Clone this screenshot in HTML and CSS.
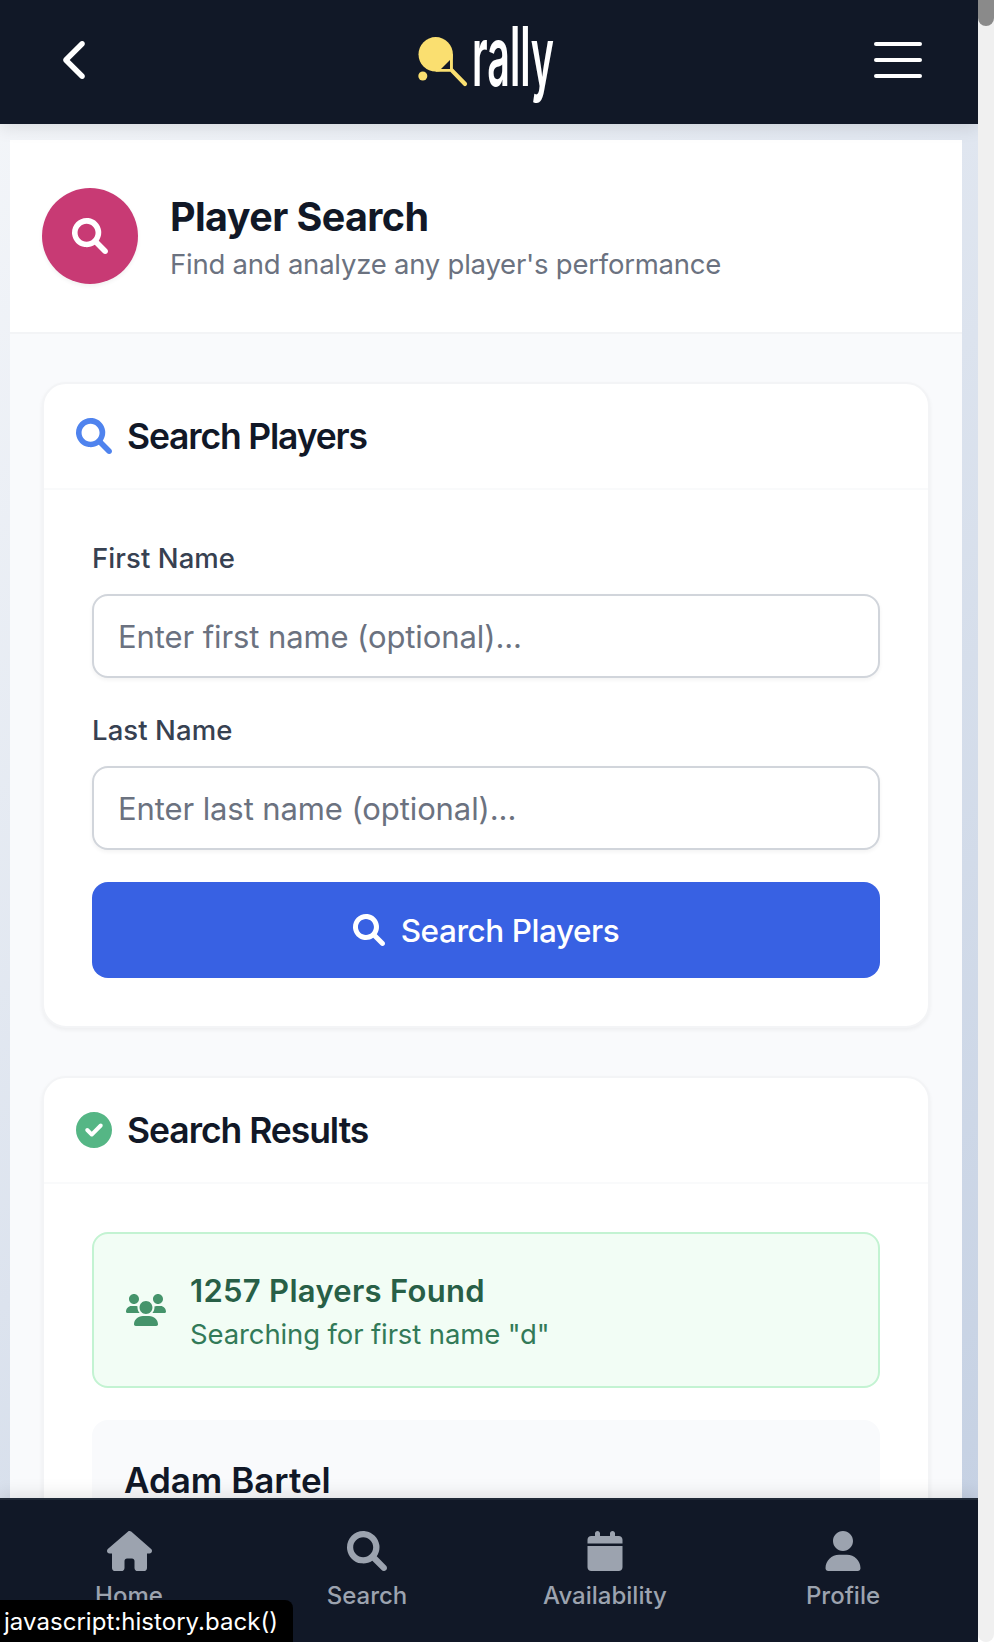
FILE: index.html
```html
<!DOCTYPE html>
<html lang="en">
<head>
<meta charset="utf-8">
<title>Player Search</title>
<link rel="stylesheet" href="styles.css">
</head>
<body>
<svg class="defs" aria-hidden="true">
  <symbol id="i-search" viewBox="0 0 512 512"><path d="M500.3 443.7l-119.7-119.7c27.22-40.41 40.65-90.9 33.46-144.7C401.8 87.79 326.8 13.32 235.2 1.723C99.01-15.51-15.51 99.01 1.724 235.2c11.6 91.64 86.08 166.7 177.6 178.9c53.8 7.189 104.3-6.236 144.7-33.46l119.7 119.7c15.62 15.62 40.95 15.62 56.57 0C515.9 484.7 515.9 459.3 500.3 443.7zM79.1 208c0-70.58 57.42-128 128-128s128 57.42 128 128c0 70.58-57.42 128-128 128S79.1 278.6 79.1 208z"/></symbol>
</svg>
<div class="window">
  <div class="page">
    <header class="topbar">
      <a class="back" aria-label="Back"><svg viewBox="0 32 256 448" width="22" height="38"><path d="M9.4 233.4c-12.5 12.5-12.5 32.8 0 45.3l192 192c12.5 12.5 32.8 12.5 45.3 0s12.5-32.8 0-45.3L77.3 256 246.6 86.6c12.5-12.5 12.5-32.8 0-45.3s-32.8-12.5-45.3 0l-192 192z"/></svg></a>
      <svg class="logo" viewBox="414 0 144 120" width="144" height="120">
        <g class="racket">
          <circle cx="435.7" cy="54.3" r="17.2"/>
          <path d="M435.7 68.4h13.8V54.3h3.4v14.2l13.7 14a2.2 2.2 0 0 1-3.1 3.1L450.3 71.8H435.7z"/>
          <circle cx="422.8" cy="76" r="4.5"/>
        </g>
        <path class="gap" d="M441 69L450 60V69z"/>
        <text class="wordmark" x="472" y="85.5" textLength="82" lengthAdjust="spacingAndGlyphs">rally</text>
      </svg>
      <div class="menu"><i></i><i></i><i></i></div>
    </header>
    <main class="content">
      <section class="hero">
        <div class="hero-icon"><svg width="36" height="36"><use href="#i-search"/></svg></div>
        <div>
          <h1>Player Search</h1>
          <p class="sub">Find and analyze any player's performance</p>
        </div>
      </section>
      <div class="cards">
        <section class="card">
          <div class="card-head">
            <svg class="blue" width="36" height="36"><use href="#i-search"/></svg>
            <h2>Search Players</h2>
          </div>
          <form class="card-body">
            <div class="field">
              <label>First Name</label>
              <input type="text" placeholder="Enter first name (optional)...">
            </div>
            <div class="field">
              <label>Last Name</label>
              <input type="text" placeholder="Enter last name (optional)...">
            </div>
            <button class="submit" type="button"><svg width="32" height="32"><use href="#i-search"/></svg><span>Search Players</span></button>
          </form>
        </section>
        <section class="card">
          <div class="card-head">
            <svg class="green" viewBox="0 0 512 512" width="36" height="36"><path d="M0 256C0 114.6 114.6 0 256 0C397.4 0 512 114.6 512 256C512 397.4 397.4 512 256 512C114.6 512 0 397.4 0 256zM371.8 211.8C382.7 200.9 382.7 183.1 371.8 172.2C360.9 161.3 343.1 161.3 332.2 172.2L224 280.4L179.8 236.2C168.9 225.3 151.1 225.3 140.2 236.2C129.3 247.1 129.3 264.9 140.2 275.8L204.2 339.8C215.1 350.7 232.9 350.7 243.8 339.8L371.8 211.8z"/></svg>
            <h2 class="results">Search Results</h2>
          </div>
          <div class="card-body">
            <div class="found">
              <svg viewBox="0 0 640 512" width="40" height="32"><path d="M319.9 320c57.41 0 103.1-46.56 103.1-104c0-57.44-46.54-104-103.1-104c-57.41 0-103.1 46.56-103.1 104C215.9 273.4 262.5 320 319.9 320zM369.9 352H270.1C191.6 352 128 411.7 128 485.3C128 500.1 140.7 512 156.4 512h327.2C499.3 512 512 500.1 512 485.3C512 411.7 448.4 352 369.9 352zM512 160c44.18 0 80-35.82 80-80S556.2 0 512 0c-44.18 0-80 35.82-80 80S467.8 160 512 160zM183.9 216c0-5.449 .9824-10.63 1.609-15.91C174.6 194.1 162.6 192 149.9 192H88.08C39.44 192 0 233.8 0 285.3C0 295.6 7.887 304 17.62 304h199.5C196.7 280.2 183.9 249.7 183.9 216zM128 160c44.18 0 80-35.82 80-80S172.2 0 128 0C83.82 0 48 35.82 48 80S83.82 160 128 160zM551.9 192h-61.84c-12.8 0-24.88 3.037-35.86 8.24C454.8 205.5 455.8 210.6 455.8 216c0 33.71-12.78 64.21-33.16 88h199.7C632.1 304 640 295.6 640 285.3C640 233.8 600.6 192 551.9 192z"/></svg>
              <div>
                <p class="count">1257 Players Found</p>
                <p class="query">Searching for first name "d"</p>
              </div>
            </div>
            <div class="player"><h3>Adam Bartel</h3></div>
          </div>
        </section>
      </div>
    </main>
    <nav class="tabs">
      <a><svg viewBox="0 0 576 512" width="45" height="40"><path d="M575.8 255.5c0 18-15 32.1-32 32.1h-32l.7 160.2c0 2.7-.2 5.4-.5 8.1V472c0 22.1-17.9 40-40 40H456c-1.1 0-2.2 0-3.3-.1c-1.4 .1-2.8 .1-4.2 .1H416 392c-22.1 0-40-17.9-40-40V448 384c0-17.7-14.3-32-32-32H256c-17.7 0-32 14.3-32 32v64 24c0 22.1-17.9 40-40 40H160 128.1c-1.5 0-3-.1-4.5-.2c-1.2 .1-2.4 .2-3.6 .2H104c-22.1 0-40-17.9-40-40V360c0-.9 0-1.9 .1-2.8V287.6H32c-18 0-32-14-32-32.1c0-9 3-17 10-24L266.4 8c7-7 15-8 22-8s15 2 21 7L564.8 231.5c8 7 12 15 11 24z"/></svg><span>Home</span></a>
      <a><svg width="40" height="40"><use href="#i-search"/></svg><span>Search</span></a>
      <a><svg viewBox="0 0 448 512" width="36" height="40"><path d="M96 32V64H48C21.5 64 0 85.5 0 112v48H448V112c0-26.5-21.5-48-48-48H352V32c0-17.7-14.3-32-32-32s-32 14.3-32 32V64H160V32c0-17.7-14.3-32-32-32S96 14.3 96 32zM448 192H0V464c0 26.5 21.5 48 48 48H400c26.5 0 48-21.5 48-48V192z"/></svg><span>Availability</span></a>
      <a><svg viewBox="0 0 448 512" width="36" height="40"><path d="M224 256c70.7 0 128-57.31 128-128s-57.3-128-128-128C153.3 0 96 57.31 96 128S153.3 256 224 256zM274.7 304H173.3C77.61 304 0 381.6 0 477.3c0 19.14 15.52 34.67 34.66 34.67h378.7C432.5 512 448 496.5 448 477.3C448 381.6 370.4 304 274.7 304z"/></svg><span>Profile</span></a>
    </nav>
    <div class="status">javascript:history.back()</div>
  </div>
  <div class="scrollbar"><div class="thumb"></div></div>
</div>
</body>
</html>
```
FILE: styles.css
```css
* { box-sizing: border-box; }
body, h1, h2, h3, p { margin: 0; }
body { font-family: Inter, "Liberation Sans", sans-serif; color: #111827; overflow: hidden; }
svg { display: block; flex: none; fill: currentColor; }
.defs { position: absolute; width: 0; height: 0; }

.window { display: flex; width: 994px; height: 1642px; background: #fff; }
.page {
  position: relative; display: flex; flex-direction: column;
  width: 978px; height: 1642px; overflow: hidden;
  background: linear-gradient(135deg, #f5f7fa 0%, #c3cfe2 100%);
}
.scrollbar { width: 16px; background: #f0f0f0; border-radius: 0 0 8px 8px; }
.thumb { height: 26px; background: #8a8a8a; border-radius: 0 0 8px 8px; }

.topbar {
  position: relative; z-index: 2; flex: none;
  display: flex; align-items: center; justify-content: space-between;
  height: 124px; padding: 0 56px 4px 63px;
  background: #111827; color: #fff;
  box-shadow: 0 4px 16px rgba(0, 0, 0, .1);
}
.back { width: 48px; }
.logo { margin-right: 13px; overflow: visible; }
.racket { fill: #fadf70; }
.gap { fill: #111827; }
.wordmark { font-size: 83px; font-weight: 600; fill: #fff; }
.menu { display: flex; flex-direction: column; gap: 12px; width: 48px; }
.menu i { height: 4px; border-radius: 2px; background: #fff; }

.content { flex: 1; min-height: 0; overflow: hidden; margin: 16px 16px 0 10px; background: #f9fafc; }
.hero {
  display: flex; align-items: center; gap: 32px;
  height: 194px; padding: 0 32px;
  background: #fff; border-bottom: 2px solid #f3f4f6;
}
.hero-icon {
  display: flex; align-items: center; justify-content: center;
  width: 96px; height: 96px; padding-bottom: 1px; border-radius: 50%;
  background: #c83a74; color: #fff; box-shadow: 0 2px 4px rgba(0, 0, 0, .06);
}
h1 { padding-top: 2px; font-size: 39.5px; font-weight: 700; line-height: 54px; letter-spacing: -.6px; }
.sub { font-size: 27.5px; line-height: 40px; letter-spacing: -.23px; color: #6b7280; }

.cards { display: flex; flex-direction: column; gap: 48px; padding: 48px 32px; }
.card {
  background: #fff; border: 2px solid #f3f4f6; border-radius: 24px;
  box-shadow: 0 2px 4px rgba(0, 0, 0, .05);
}
.card-head {
  display: flex; align-items: center; gap: 15px;
  height: 106px; padding: 0 32px; border-bottom: 2px solid #f9fafb;
}
.card-head svg { margin-bottom: 1px; }
.blue { color: #4f83ee; }
.green { color: #55b685; }
h2 { padding-top: 2px; font-size: 35.5px; font-weight: 600; line-height: 56px; letter-spacing: -1.18px; }
.results { letter-spacing: -1.05px; }
.card-body { display: flex; flex-direction: column; gap: 32px; padding: 48px; }
.field { display: flex; flex-direction: column; gap: 16px; }
label { font-size: 27.5px; font-weight: 500; line-height: 40px; letter-spacing: .08px; color: #374151; }
input {
  width: 100%; height: 84px; padding: 0 24px;
  font: 400 31px Inter, "Liberation Sans", sans-serif; letter-spacing: -.1px;
  border: 2px solid #d1d5db; border-radius: 16px; background: #fff;
  box-shadow: 0 2px 4px rgba(0, 0, 0, .05);
}
input::placeholder { color: #6b7280; opacity: 1; }
.submit {
  display: flex; align-items: center; justify-content: center; gap: 16px;
  height: 96px; border: 0; border-radius: 16px; background: #3861e3; color: #fff;
  font: 500 31.5px Inter, "Liberation Sans", sans-serif; letter-spacing: -.45px;
}
.found {
  display: flex; align-items: center; gap: 24px;
  height: 156px; padding: 0 32px;
  background: #f2fdf5; border: 2px solid #c3f3d2; border-radius: 16px; color: #45946b;
}
.count { padding-top: 1px; font-size: 31px; font-weight: 600; line-height: 47px; letter-spacing: .3px; color: #285f47; }
.query { font-size: 27.5px; line-height: 40px; letter-spacing: -.12px; color: #327a58; }
.player { height: 240px; padding: 32px; border-radius: 16px; background: #f9fafc; }
h3 { font-size: 35px; font-weight: 600; line-height: 56px; }

.tabs {
  position: relative; z-index: 2; flex: none; display: flex;
  height: 144px; padding: 31px 16px 0 10px;
  background: #111827; border-top: 2px solid #1f2937; color: #9ca3af;
  box-shadow: 0 -4px 16px rgba(0, 0, 0, .1);
}
.tabs a { flex: 1; display: flex; flex-direction: column; align-items: center; gap: 9px; }
.tabs span { font-size: 24px; font-weight: 500; line-height: 32px; }
.status {
  position: absolute; z-index: 3; left: 0; bottom: 0;
  width: 293px; height: 42px; padding-left: 4px;
  background: #000; color: #fff; border-radius: 0 8px 0 0;
  font-size: 24px; line-height: 43px; letter-spacing: .04px; white-space: nowrap;
}
```
